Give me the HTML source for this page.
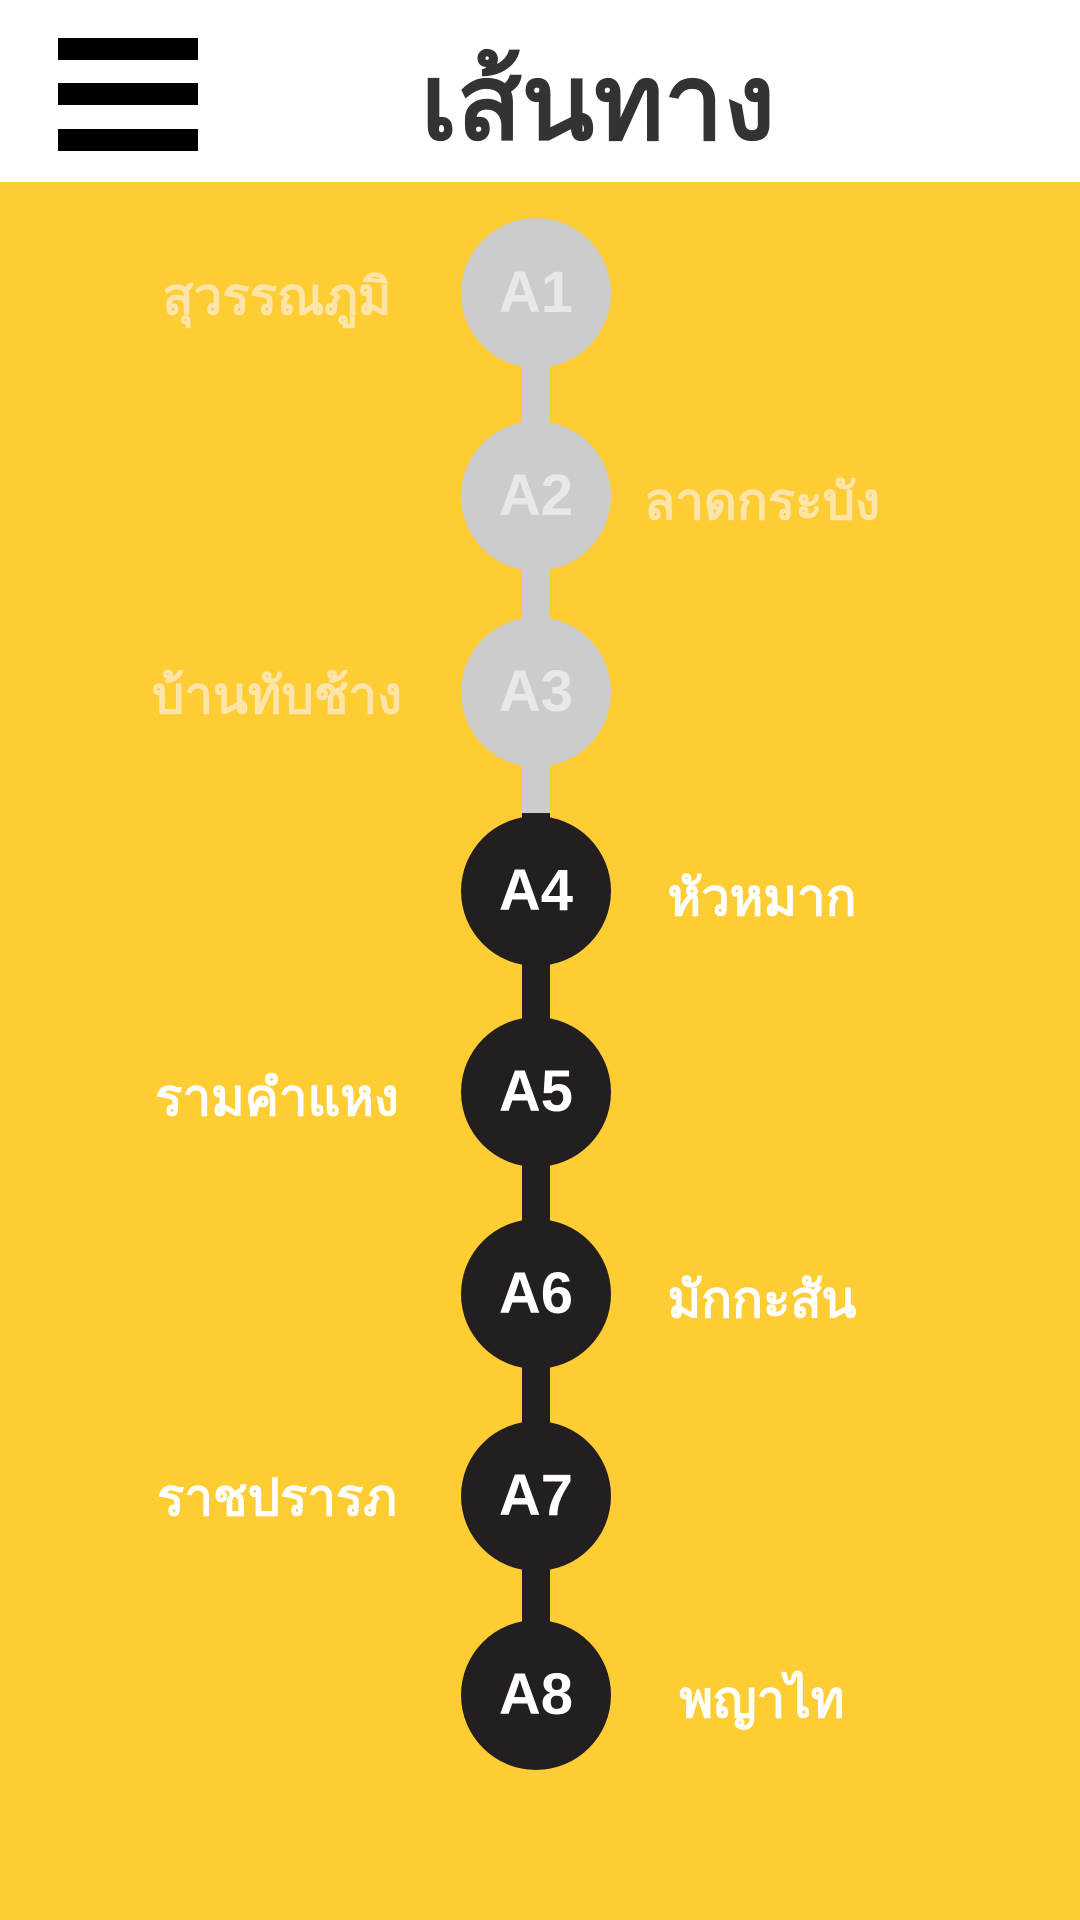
<!DOCTYPE html>
<html><head><meta charset="utf-8"><style>
body{margin:0;width:1080px;height:1920px;background:#fecc33;position:relative;overflow:hidden;font-family:"Liberation Sans","DejaVu Sans",sans-serif;}
.hdr{position:absolute;left:0;top:0;width:1080px;height:182px;background:#fff;}
.bar{position:absolute;left:58px;width:140px;height:22px;background:#000;}
.title{position:absolute;left:0;width:1080px;top:48px;text-align:center;font-size:106px;font-weight:bold;color:#333;line-height:110px;padding-left:116px;box-sizing:border-box;}
.line{position:absolute;left:522px;width:28px;}
.c{position:absolute;left:461px;width:150px;height:150px;border-radius:50%;text-align:center;line-height:150px;font-size:58px;font-weight:bold;}
.g{background:#cccccc;color:#e8e8e8;}
.d{background:#231f20;color:#fff;}
.l{position:absolute;width:300px;text-align:center;font-size:51px;font-weight:bold;line-height:60px;}
.f{color:#fde4a8}.w{color:#fff}
</style></head><body>
<div class="hdr">
<div class="bar" style="top:38px"></div><div class="bar" style="top:83px"></div><div class="bar" style="top:129px"></div>
<div class="title">เส้นทาง</div>
</div>
<div class="line" style="top:293px;height:520px;background:#ccc"></div>
<div class="line" style="top:813px;height:880px;background:#231f20"></div>
<div class="c g" style="top:218px">A1</div>
<div class="c g" style="top:421px">A2</div>
<div class="c g" style="top:617px">A3</div>
<div class="c d" style="top:816px">A4</div>
<div class="c d" style="top:1017px">A5</div>
<div class="c d" style="top:1219px">A6</div>
<div class="c d" style="top:1421px">A7</div>
<div class="c d" style="top:1620px">A8</div>
<div class="l f" style="left:127px;top:267px">สุวรรณภูมิ</div>
<div class="l f" style="left:612px;top:472px">ลาดกระบัง</div>
<div class="l f" style="left:127px;top:666px">บ้านทับช้าง</div>
<div class="l w" style="left:612px;top:868px">หัวหมาก</div>
<div class="l w" style="left:127px;top:1068px">รามคำแหง</div>
<div class="l w" style="left:612px;top:1270px">มักกะสัน</div>
<div class="l w" style="left:127px;top:1468px">ราชปรารภ</div>
<div class="l w" style="left:612px;top:1670px">พญาไท</div>
</body></html>
